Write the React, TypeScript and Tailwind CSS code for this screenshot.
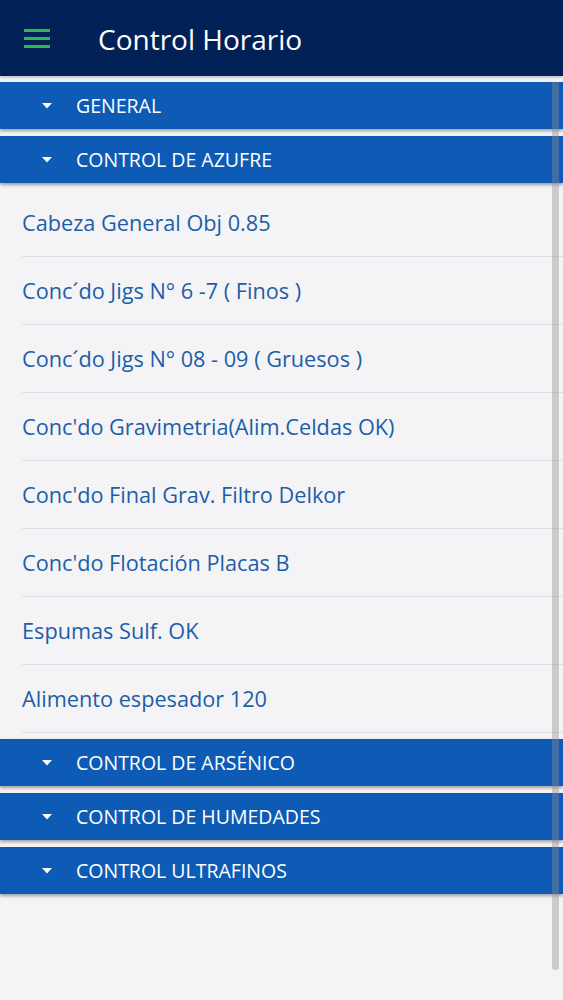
import React from 'react'

const items = [
  'Cabeza General Obj 0.85',
  'Conc´do Jigs N° 6 -7 ( Finos )',
  'Conc´do Jigs N° 08 - 09 ( Gruesos )',
  "Conc'do Gravimetria(Alim.Celdas OK)",
  "Conc'do Final Grav. Filtro Delkor",
  "Conc'do Flotación Placas B",
  'Espumas Sulf. OK',
  'Alimento espesador 120',
]

function SectionBar({ title }: { title: string }) {
  return (
    <div className="h-[47px] bg-[#0d5bb4] shadow-[0_2px_3px_rgba(0,0,0,0.35)] flex items-center text-white">
      <svg width="10" height="6" viewBox="0 0 10 6" className="ml-[42px]">
        <path d="M0 0 L10 0 L5 5.5 Z" fill="#fff" />
      </svg>
      <span className="ml-[24px] text-[19.5px] leading-none">{title}</span>
    </div>
  )
}

export default function App() {
  return (
    <div className="w-[563px] h-[1000px] bg-[#f4f4f6] relative overflow-hidden font-['Open_Sans',sans-serif]">
      {/* Top bar */}
      <header className="h-[76px] bg-[#012157] flex items-center shadow-[0_1px_3px_rgba(0,0,0,0.3)]">
        <svg width="26" height="19" viewBox="0 0 26 19" className="ml-[24px] mt-[1px]">
          <rect x="0" y="0" width="26" height="3" fill="#2fb84d" />
          <rect x="0" y="8" width="26" height="3" fill="#2fb84d" />
          <rect x="0" y="16" width="26" height="3" fill="#2fb84d" />
        </svg>
        <h1 className="ml-[48px] text-white text-[28px] leading-none mt-[1px]">Control Horario</h1>
      </header>

      <main className="pt-[6px] flex flex-col">
        <SectionBar title="GENERAL" />
        <div className="h-[7px]" />
        <SectionBar title="CONTROL DE AZUFRE" />

        <ul className="pt-[6px] pb-[6px]">
          {items.map((item) => (
            <li key={item} className="ml-[22px] h-[68px] border-b border-[#dedee2] flex items-center">
              <span className="text-[21.7px] leading-none text-[#1c5ea9]">{item}</span>
            </li>
          ))}
        </ul>

        <SectionBar title="CONTROL DE ARSÉNICO" />
        <div className="h-[7px]" />
        <SectionBar title="CONTROL DE HUMEDADES" />
        <div className="h-[7px]" />
        <SectionBar title="CONTROL ULTRAFINOS" />
      </main>

      {/* scroll indicator */}
      <div className="absolute right-[4px] top-[82px] w-[7px] h-[888px] rounded-b-[3px] bg-[#8e8e92]/40" />
    </div>
  )
}
